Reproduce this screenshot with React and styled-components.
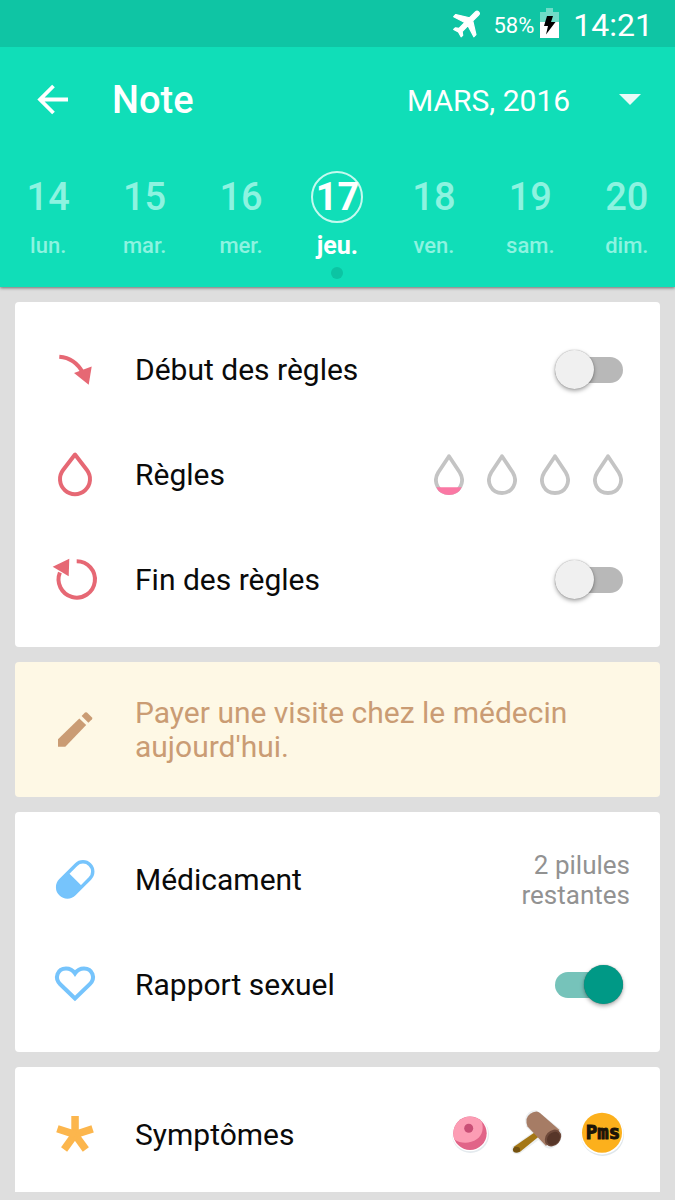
import React, { useState } from 'react';
import styled, { createGlobalStyle } from 'styled-components';

const GlobalStyle = createGlobalStyle`
  * {
    box-sizing: border-box;
  }
  body {
    margin: 0;
    background: #dedede;
    font-family: Roboto, 'Noto Sans', sans-serif;
    color: #0a0a0a;
  }
  button, select, input {
    margin: 0;
    padding: 0;
    border: 0;
    background: none;
    font-family: inherit;
    color: inherit;
  }
`;

const Header = styled.header`
  background: #10deb8;
  color: #fff;
  box-shadow: 0 1px 3px rgba(0, 0, 0, 0.5);
`;

const StatusBar = styled.div`
  display: flex;
  align-items: center;
  justify-content: flex-end;
  gap: 6px;
  height: 47px;
  padding: 3px 22px 0 0;
  background: #0fc5a4;
  svg {
    margin-bottom: 4px;
  }
`;

const Percent = styled.span`
  margin-left: 4px;
  font-size: 22px;
`;

const Clock = styled.span`
  margin-left: 8px;
  font-size: 32px;
`;

const AppBar = styled.div`
  display: flex;
  align-items: center;
  height: 106px;
  padding: 0 34px;
`;

const BackButton = styled.button`
  display: flex;
  padding-right: 44px;
  cursor: pointer;
`;

const Title = styled.h1`
  flex: 1;
  margin: 0;
  font-size: 38px;
  font-weight: 500;
`;

const MonthPicker = styled.label`
  position: relative;
  display: flex;
  align-items: center;
  svg {
    position: absolute;
    right: 0;
    pointer-events: none;
  }
`;

const MonthSelect = styled.select`
  appearance: none;
  padding-right: 70px;
  font-size: 30px;
  option {
    color: #000;
  }
`;

const Week = styled.div`
  display: grid;
  grid-template-columns: repeat(7, 1fr);
  height: 134px;
  padding-top: 18px;
`;

const Day = styled.button`
  display: flex;
  flex-direction: column;
  align-items: center;
  color: ${({ $active }) => ($active ? '#fff' : '#8df3e0')};
  cursor: pointer;
`;

const DayNumber = styled.span`
  display: flex;
  align-items: center;
  justify-content: center;
  width: 52px;
  height: 52px;
  border: 2px solid ${({ $active }) => ($active ? '#c4faef' : 'transparent')};
  border-radius: 50%;
  font-size: 38px;
  font-weight: ${({ $active }) => ($active ? 700 : 500)};
`;

const DayName = styled.span`
  margin-top: 8px;
  line-height: 30px;
  font-size: ${({ $active }) => ($active ? 25 : 22)}px;
  font-weight: ${({ $active }) => ($active ? 700 : 500)};
`;

const Dot = styled.span`
  width: 12px;
  height: 12px;
  margin-top: 6px;
  border-radius: 50%;
  background: #0cc4a3;
`;

const Cards = styled.main`
  display: flex;
  flex-direction: column;
  gap: 15px;
  padding: 15px 15px 8px;
`;

const Card = styled.section`
  padding: 15px 0 ${({ $last }) => ($last ? 5 : 15)}px;
  border-radius: ${({ $last }) => ($last ? '4px 4px 0 0' : '4px')};
  background: ${({ $note }) => ($note ? '#fef8e5' : '#fff')};
`;

const Row = styled.div`
  display: flex;
  align-items: center;
  height: 105px;
  padding-right: 30px;
`;

const IconCell = styled.div`
  display: flex;
  flex: none;
  justify-content: center;
  width: 120px;
`;

const Label = styled.label`
  flex: 1;
  font-size: 30px;
`;

const NoteText = styled.p`
  flex: 1;
  margin: 0;
  font-size: 30px;
  line-height: 34px;
  color: #ca9c74;
`;

const Remaining = styled.span`
  width: 120px;
  font-size: 26px;
  line-height: 30px;
  text-align: right;
  color: #929292;
`;

const Switch = styled.input.attrs({ type: 'checkbox', role: 'switch' })`
  appearance: none;
  position: relative;
  width: 68px;
  height: 40px;
  margin-right: 7px;
  cursor: pointer;
  &::before {
    content: '';
    position: absolute;
    inset: 7px 0;
    border-radius: 13px;
    background: #b8b8b8;
  }
  &::after {
    content: '';
    position: absolute;
    top: 0;
    left: 0;
    width: 39px;
    height: 39px;
    border-radius: 50%;
    background: #f0f0f0;
    box-shadow: 0 2px 4px rgba(0, 0, 0, 0.35), 0 0 1px rgba(0, 0, 0, 0.4);
  }
  &:checked::before {
    background: #76c3ba;
  }
  &:checked::after {
    left: 29px;
    background: #009986;
  }
`;

const FlowPicker = styled.div`
  display: flex;
  gap: 23px;
  margin-right: 7px;
`;

const FlowButton = styled.button`
  display: flex;
  cursor: pointer;
`;

const Symptoms = styled.div`
  display: flex;
  gap: 24px;
  margin-right: 7px;
  svg {
    overflow: visible;
  }
`;

const Icon = ({ color, children }) => (
  <IconCell>
    <svg width="60" height="61" viewBox="0 0 60 61" fill="none" stroke={color} strokeWidth="4" aria-hidden="true">
      {children}
    </svg>
  </IconCell>
);

const StartIcon = () => (
  <Icon color="#e66874">
    <path d="M14.3 17.8Q30 19 38 34" />
    <path d="M46.7 27.5L29 33.9L43.7 45.7Z" fill="#e66874" stroke="none" />
  </Icon>
);

const DropIcon = () => (
  <Icon color="#e66874">
    <path d="M30 10.5L18.1 26A15 15 0 1 0 41.9 26Z" strokeLinejoin="round" />
  </Icon>
);

const EndIcon = () => (
  <Icon color="#e66874">
    <path d="M31.7 12.2A18.2 18.2 0 1 1 14.9 23.5" />
    <path d="M7.7 17.7L24.3 9.7L23.7 27.3Z" fill="#e66874" stroke="none" />
  </Icon>
);

const PencilIcon = () => (
  <Icon color="none">
    <path d="M13 47.7V40.3L34.3 19.4L41.2 26L20.3 47.7Z" fill="#ca9c74" />
    <path d="M36.6 17L40 13.6Q41 12.8 42 13.6L47 18.4Q47.8 19.3 47 20.2L43.4 23.7Z" fill="#ca9c74" />
  </Icon>
);

const PillIcon = () => (
  <Icon color="#76c4fc">
    <g transform="translate(30.2 30.4) rotate(-45)">
      <rect x="-20.8" y="-9.8" width="41.6" height="19.6" rx="9.8" strokeWidth="3.4" />
      <path d="M0 -9.8H-11A9.8 9.8 0 0 0 -11 9.8H0Z" fill="#76c4fc" stroke="none" />
    </g>
  </Icon>
);

const HeartIcon = () => (
  <Icon color="#76c4fc">
    <path d="M30 44.5L15.2 30.2C9 24 12.5 14.4 21 14.4C25 14.4 28 16.4 30 19.4C32 16.4 35 14.4 39 14.4C47.5 14.4 51 24 44.8 30.2Z" />
  </Icon>
);

const AsteriskIcon = () => (
  <Icon color="none">
    {[0, 72, 144, 216, 288].map((angle) => (
      <rect key={angle} x="26.3" y="12" width="7.5" height="19" fill="#fcb64d" transform={`rotate(${angle} 30 30.5)`} />
    ))}
  </Icon>
);

const FlowDrop = ({ filled }) => (
  <svg width="30" height="42" viewBox="0 0 30 42" aria-hidden="true">
    <path
      d="M15 2.2L4.2 18.5C-1.5 28 4.5 39 15 39S31.5 28 25.8 18.5Z"
      fill="none"
      stroke="#c4c4c4"
      strokeWidth="3.8"
      strokeLinejoin="round"
    />
    {filled && <path d="M2.3 33.3H27.7C25.5 38.600 20.5 40.900 15 40.900S4.5 38.600 2.3 33.3Z" fill="#fa78a4" />}
  </svg>
);

const CrampIcon = () => (
  <svg width="42" height="61" viewBox="0 0 42 61" role="img" aria-label="Crampes">
    <circle cx="21.5" cy="30.5" r="18.5" fill="#e4eaee" />
    <circle cx="21" cy="29.3" r="18" fill="#fff" />
    <circle cx="21" cy="29.3" r="16.7" fill="#e16488" />
    <path d="M5.5 35.5A16.7 16.7 0 0 1 32.5 17.2C35 24 33.5 31 28 35C21 40 12 40 5.5 35.5Z" fill="#fc9db4" />
    <circle cx="19.7" cy="24.3" r="4.5" fill="#c94f76" />
  </svg>
);

const HammerIcon = () => (
  <svg width="42" height="61" viewBox="0 0 42 61" role="img" aria-label="Maux de tête">
    <g stroke="#eceff1" strokeWidth="3" strokeLinejoin="round">
      <path d="M20 28.5L-2 44C-2.5 48 1.5 50 4.5 48L25 33Z" fill="#fff" />
      <path d="M11.5 16Q13 7.5 21 7.7L44 26Q48 32 41 40Q36 45 31 42L12.5 22Z" fill="#fff" />
    </g>
    <path d="M19.5 28.5L-1.5 43L4.5 48.3L24.5 32Z" fill="#a47716" />
    <ellipse cx="1.5" cy="45.7" rx="3.6" ry="3" fill="#75520f" />
    <path d="M11.5 15Q14 8 21.5 7.5Q23.5 7.8 25 9L44.5 26L31 42L12.5 22.5Q11 20 11.5 15Z" fill="#a67c65" />
    <ellipse cx="38" cy="34" rx="9.2" ry="7.3" fill="#6f4a3b" transform="rotate(-48 38 34)" />
    <ellipse cx="38.5" cy="34.5" rx="7.3" ry="5.8" fill="#573629" transform="rotate(-48 38.5 34.5)" />
  </svg>
);

const PmsText = styled.text`
  font-family: 'DejaVu Sans Mono', monospace;
  font-size: 19px;
  font-weight: 700;
  text-anchor: middle;
  fill: #1c1408;
  stroke: #1c1408;
  stroke-width: 1px;
`;

const PmsIcon = () => (
  <svg width="42" height="61" viewBox="0 0 42 61" role="img" aria-label="PMS">
    <circle cx="21.5" cy="30.5" r="21.5" fill="#dfe6ea" />
    <circle cx="21" cy="29" r="21.5" fill="#fff" />
    <circle cx="21" cy="28.7" r="20" fill="#fcb01c" />
    <PmsText x="22" y="35">Pms</PmsText>
  </svg>
);

const DAYS = [
  { number: 14, name: 'lun.' },
  { number: 15, name: 'mar.' },
  { number: 16, name: 'mer.' },
  { number: 17, name: 'jeu.' },
  { number: 18, name: 'ven.' },
  { number: 19, name: 'sam.' },
  { number: 20, name: 'dim.' },
];

const App = () => {
  const [day, setDay] = useState(17);
  const [flow, setFlow] = useState(1);

  return (
    <>
      <GlobalStyle />
      <Header>
        <StatusBar>
          <svg width="32" height="32" viewBox="0 0 32 32" fill="#fff" stroke="#fff" aria-hidden="true">
            <path
              d="M21 16v-2l-8-5V3.5c0-.83-.67-1.5-1.5-1.5S10 2.67 10 3.5V9l-8 5v2l8-2.5V19l-2 1.5V22l3.5-1 3.5 1v-1.5L13 19v-5.5l8 2.5z"
              transform="translate(17 15.5) rotate(45) scale(1.5) translate(-11.5 -12)"
              strokeWidth="0.8"
              strokeLinejoin="round"
            />
          </svg>
          <Percent>58%</Percent>
          <svg width="19" height="30" viewBox="0 0 19 30" aria-hidden="true">
            <path d="M6 0H13V4H19V14H0V4H6Z" fill="#6fdcc8" />
            <path d="M0 14H19V30H0Z" fill="#fff" />
            <path d="M7 8H13L11 14H15.5L6 26.5L8 18H4Z" fill="#000" />
          </svg>
          <Clock>14:21</Clock>
        </StatusBar>
        <AppBar>
          <BackButton aria-label="Retour">
            <svg width="34" height="34" viewBox="0 0 34 34" fill="none" stroke="#fff" strokeWidth="3.8">
              <path d="M34 16.5H6M19.5 3L6 16.5L19.5 30" />
            </svg>
          </BackButton>
          <Title>Note</Title>
          <MonthPicker>
            <MonthSelect aria-label="Mois">
              <option>MARS, 2016</option>
            </MonthSelect>
            <svg width="22" height="15" viewBox="0 0 22 15" aria-hidden="true">
              <path d="M0 1H22L11 12Z" fill="#e9fbf7" />
            </svg>
          </MonthPicker>
        </AppBar>
        <Week>
          {DAYS.map(({ number, name }) => (
            <Day key={number} $active={number === day} onClick={() => setDay(number)}>
              <DayNumber $active={number === day}>{number}</DayNumber>
              <DayName $active={number === day}>{name}</DayName>
              {number === 17 && <Dot />}
            </Day>
          ))}
        </Week>
      </Header>
      <Cards>
        <Card>
          <Row>
            <StartIcon />
            <Label htmlFor="start">Début des règles</Label>
            <Switch id="start" />
          </Row>
          <Row>
            <DropIcon />
            <Label as="span">Règles</Label>
            <FlowPicker>
              {[1, 2, 3, 4].map((level) => (
                <FlowButton key={level} aria-label={`Flux ${level}`} onClick={() => setFlow(level)}>
                  <FlowDrop filled={level <= flow} />
                </FlowButton>
              ))}
            </FlowPicker>
          </Row>
          <Row>
            <EndIcon />
            <Label htmlFor="end">Fin des règles</Label>
            <Switch id="end" />
          </Row>
        </Card>
        <Card $note>
          <Row>
            <PencilIcon />
            <NoteText>Payer une visite chez le médecin aujourd'hui.</NoteText>
          </Row>
        </Card>
        <Card>
          <Row>
            <PillIcon />
            <Label as="span">Médicament</Label>
            <Remaining>2 pilules restantes</Remaining>
          </Row>
          <Row>
            <HeartIcon />
            <Label htmlFor="intercourse">Rapport sexuel</Label>
            <Switch id="intercourse" defaultChecked />
          </Row>
        </Card>
        <Card $last>
          <Row>
            <AsteriskIcon />
            <Label as="span">Symptômes</Label>
            <Symptoms>
              <CrampIcon />
              <HammerIcon />
              <PmsIcon />
            </Symptoms>
          </Row>
        </Card>
      </Cards>
    </>
  );
};

export default App;
